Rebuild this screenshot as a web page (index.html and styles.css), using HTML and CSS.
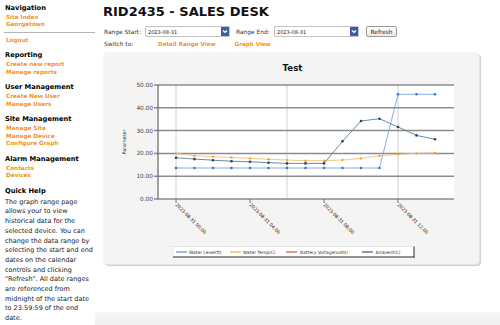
FILE: index.html
```html
<!DOCTYPE html>
<html>
    <head>
        <meta name="viewport" content="width=device-width, initial-scale=1" />
        <title>RID2435 - SALES DESK</title>
        <link rel="stylesheet" href="styles.css">
    </head>
<body>

    <div class="page">

        <div class="side_nav">
            <div class="nav_section nav_section--top">
                <div class="nav_head">Navigation</div>
                <a class="nav_link" href="#">Site Index</a>
                <a class="nav_link" href="#">Georgetown</a>
            </div>
            <div class="nav_rule"></div>
            <div class="nav_section">
                <a class="nav_link" href="#">Logout</a>
            </div>
            <div class="nav_section">
                <div class="nav_head">Reporting</div>
                <a class="nav_link" href="#">Create new report</a>
                <a class="nav_link" href="#">Manage reports</a>
            </div>
            <div class="nav_section">
                <div class="nav_head">User Management</div>
                <a class="nav_link" href="#">Create New User</a>
                <a class="nav_link" href="#">Manage Users</a>
            </div>
            <div class="nav_section">
                <div class="nav_head">Site Management</div>
                <a class="nav_link" href="#">Manage Site</a>
                <a class="nav_link" href="#">Manage Device</a>
                <a class="nav_link" href="#">Configure Graph</a>
            </div>
            <div class="nav_section">
                <div class="nav_head">Alarm Management</div>
                <a class="nav_link" href="#">Contacts</a>
                <a class="nav_link" href="#">Devices</a>
            </div>
            <div class="nav_section">
                <div class="nav_head">Quick Help</div>
                <p class="help_text">The graph range page allows your to view historical data for the selected device. You can change the data range by selecting the start and end dates on the calendar controls and clicking "Refresh". All date ranges are referenced from midnight of the start date to 23:59:59 of the end date.</p>
            </div>
        </div>

        <div class="main">
            <h1 class="site_title">RID2435 - SALES DESK</h1>

            <div class="range_row">
                <span class="range_label">Range Start:</span>
                <div class="fake_select">
                    <span>2023-08-31</span>
                    <span class="fake_select_arrow">
                        <svg width="6" height="5" viewBox="0 0 6 5"><path d="M1 1.5 L3 3.5 L5 1.5" fill="none" stroke="white" stroke-width="1.2"/></svg>
                    </span>
                </div>
                <span class="range_label range_label--end">Range End:</span>
                <div class="fake_select">
                    <span>2023-08-31</span>
                    <span class="fake_select_arrow">
                        <svg width="6" height="5" viewBox="0 0 6 5"><path d="M1 1.5 L3 3.5 L5 1.5" fill="none" stroke="white" stroke-width="1.2"/></svg>
                    </span>
                </div>
                <button class="refresh_button">Refresh</button>
            </div>

            <div class="switch_row">
                <span class="switch_label">Switch to:</span>
                <a class="switch_link" href="#">Detail Range View</a>
                <a class="switch_link switch_link--graph" href="#">Graph View</a>
            </div>

            <div class="chart_panel">
                <svg class="chart" width="376" height="212" viewBox="103 52 376 212">
                    <defs>
                        <marker id="dot_level" markerUnits="userSpaceOnUse" markerWidth="4" markerHeight="4" refX="2" refY="2"><circle cx="2" cy="2" r="1.3" fill="#3a74c8"/></marker>
                        <marker id="dot_temp" markerUnits="userSpaceOnUse" markerWidth="4" markerHeight="4" refX="2" refY="2"><circle cx="2" cy="2" r="1.2" fill="#f0a530"/></marker>
                        <marker id="dot_amb" markerUnits="userSpaceOnUse" markerWidth="4" markerHeight="4" refX="2" refY="2"><circle cx="2" cy="2" r="1.3" fill="#1c4778"/></marker>
                    </defs>

                    <text class="chart_title" x="292.5" y="71" text-anchor="middle">Test</text>

                    <rect x="158" y="85" width="296" height="114" fill="white"/>

                    <!-- vertical grid -->
                    <g stroke="#c4c4c4" stroke-width="0.8">
                        <line x1="176" y1="85" x2="176" y2="199"/>
                        <line x1="287" y1="85" x2="287" y2="199"/>
                        <line x1="398" y1="85" x2="398" y2="199"/>
                    </g>

                    <!-- horizontal grid -->
                    <g stroke="#8c8c8c" stroke-width="1.5">
                        <line x1="154" y1="85" x2="454" y2="85"/>
                        <line x1="154" y1="107.8" x2="454" y2="107.8"/>
                        <line x1="154" y1="130.6" x2="454" y2="130.6"/>
                        <line x1="154" y1="153.4" x2="454" y2="153.4"/>
                        <line x1="154" y1="176.2" x2="454" y2="176.2"/>
                        <line x1="154" y1="199" x2="454" y2="199"/>
                    </g>
                    <line x1="158" y1="85" x2="158" y2="199" stroke="#666" stroke-width="1.2"/>

                    <g stroke="#555" stroke-width="0.8">
                        <line x1="176" y1="199" x2="176" y2="203"/>
                        <line x1="250" y1="199" x2="250" y2="203"/>
                        <line x1="324" y1="199" x2="324" y2="203"/>
                        <line x1="398" y1="199" x2="398" y2="203"/>
                    </g>

                    <g class="axis_text" text-anchor="end">
                        <text x="153" y="87">50.00</text>
                        <text x="153" y="109.8">40.00</text>
                        <text x="153" y="132.6">30.00</text>
                        <text x="153" y="155.4">20.00</text>
                        <text x="153" y="178.2">10.00</text>
                        <text x="153" y="201">0.00</text>
                    </g>

                    <text class="axis_name" x="126" y="142" text-anchor="middle" transform="rotate(-90 126 142)">Parameter</text>

                    <g class="date_text">
                        <text x="175" y="205" transform="rotate(45 175 205)">2023-08-31 00:00</text>
                        <text x="249" y="205" transform="rotate(45 249 205)">2023-08-31 04:00</text>
                        <text x="323" y="205" transform="rotate(45 323 205)">2023-08-31 08:00</text>
                        <text x="397" y="205" transform="rotate(45 397 205)">2023-08-31 12:00</text>
                    </g>

                    <!-- series -->
                    <polyline class="series" stroke="#76a5e6" marker-start="url(#dot_level)" marker-mid="url(#dot_level)" marker-end="url(#dot_level)"
                        points="176,168 194.5,168 213,168 231.5,168 250,168 268.5,168 287,168 305.5,168 324,168 342.5,168 361,168 379.5,168 398,94.3 416.5,94.3 435,94.3"/>
                    <polyline class="series" stroke="#f5c27a" marker-start="url(#dot_temp)" marker-mid="url(#dot_temp)" marker-end="url(#dot_temp)"
                        points="176,153.6 194.5,155.7 213,156.6 231.5,157.5 250,158.4 268.5,159.3 287,160 305.5,160.7 324,160.7 342.5,160 361,158.4 379.5,155.9 398,154.3 416.5,153.4 435,152.9"/>
                    <polyline class="series" stroke="#5e7f90" marker-start="url(#dot_amb)" marker-mid="url(#dot_amb)" marker-end="url(#dot_amb)"
                        points="176,157.7 194.5,159.1 213,160.2 231.5,161.2 250,161.8 268.5,162.7 287,163.4 305.5,163.4 324,163.4 342.5,141.3 361,121 379.5,118.7 398,127 416.5,135.4 435,139.3"/>

                    <!-- legend -->
                    <rect x="173" y="246.5" width="241" height="10.5" fill="white" stroke="#d0d0d0" stroke-width="0.5"/>
                    <line x1="173" y1="257" x2="414.5" y2="257" stroke="#333" stroke-width="1"/>
                    <line x1="414" y1="246.5" x2="414" y2="257.5" stroke="#333" stroke-width="1"/>
                    <g stroke-width="1.2">
                        <line x1="176" y1="252" x2="187" y2="252" stroke="#5b8fd8"/>
                        <line x1="230" y1="252" x2="241" y2="252" stroke="#f4b042"/>
                        <line x1="286" y1="252" x2="297" y2="252" stroke="#e0502a"/>
                        <line x1="362" y1="252" x2="373" y2="252" stroke="#2c5b85"/>
                    </g>
                    <g class="legend_text">
                        <text x="189" y="253.6">Water Level(ft)</text>
                        <text x="243" y="253.6">Water Temp(C)</text>
                        <text x="300" y="253.6">Battery Voltage(volts)</text>
                        <text x="375.5" y="253.6">Ambient(C)</text>
                    </g>
                </svg>
            </div>

            <div class="bottom_band"></div>
        </div>

    </div>

</body>
</html>
```

FILE: styles.css
```css
body {
    margin: 0;
    font-family: 'DejaVu Sans', 'Liberation Sans', sans-serif;
    background-color: white;
    color: #222;
}

.page {
    display: flex;
    align-items: flex-start;
}

.side_nav {
    width: 90px;
    padding-left: 5px;
    flex-shrink: 0;
}

.nav_section {
    display: flex;
    flex-direction: column;
    margin-bottom: 6.4px;
}

.nav_section--top {
    margin-top: 3px;
    margin-bottom: 3.4px;
}

.nav_head {
    font-size: 6.7px;
    font-weight: bold;
    color: black;
    line-height: 10px;
    margin-bottom: 1px;
}

.nav_link {
    font-size: 5.7px;
    font-weight: bold;
    color: #f39322;
    line-height: 7.3px;
    text-decoration: none;
    padding-left: 1px;
}

.nav_rule {
    height: 1px;
    background-color: #b5b5b5;
    margin: 0 0 3.8px -1px;
}

.help_text {
    margin: 1px 0 0 0;
    font-size: 6.5px;
    line-height: 9.7px;
    color: #222;
}

.main {
    padding-left: 8px;
    padding-top: 4px;
    flex: 1;
}

.site_title {
    margin: 0;
    font-size: 13px;
    line-height: 16px;
    color: #111;
}

.range_row {
    display: flex;
    align-items: center;
    margin-top: 6px;
    height: 11px;
    font-size: 5.9px;
}

.range_label {
    width: 41px;
    padding-left: 1px;
    color: #333;
}

.range_label--end {
    width: 38px;
    padding-left: 0;
    margin-left: 6px;
}

.fake_select {
    width: 81px;
    height: 9px;
    border: 1px solid #c4c4c4;
    border-radius: 1px;
    background-color: white;
    display: flex;
    align-items: center;
    justify-content: space-between;
    font-size: 5px;
    padding-left: 2px;
}

.fake_select_arrow {
    width: 8px;
    height: 9px;
    background-color: #3d5ea6;
    display: flex;
    align-items: center;
    justify-content: center;
}

.refresh_button {
    margin-left: 7px;
    height: 11px;
    width: 31px;
    padding: 0;
    font-family: inherit;
    font-size: 5.8px;
    color: #222;
    border: 1px solid #9a9a9a;
    border-radius: 2px;
    background: linear-gradient(#ffffff, #ececec);
}

.switch_row {
    display: flex;
    align-items: center;
    margin-top: 3px;
    height: 8px;
    font-size: 5.9px;
}

.switch_label {
    width: 54px;
    padding-left: 1px;
    color: #333;
}

.switch_link {
    font-size: 5.6px;
    font-weight: bold;
    color: #f39322;
    text-decoration: none;
}

.switch_link--graph {
    margin-left: 19px;
}

.chart_panel {
    margin-top: 4px;
    width: 376px;
    height: 212px;
    background-color: #f4f4f4;
    border-radius: 4px;
    box-shadow: 1px 1px 0 #e2e2e2, 2px 2px 1px #cfcfcf;
}

.chart {
    display: block;
}

.chart_title {
    font-size: 8.6px;
    font-weight: bold;
    fill: #111;
}

.axis_text {
    font-size: 5.8px;
    fill: #444;
}

.axis_name {
    font-size: 4.8px;
    fill: #333;
}

.date_text {
    font-size: 4.6px;
    fill: #222;
}

.series {
    fill: none;
    stroke-width: 0.9;
}

.legend_text {
    font-size: 4.4px;
    fill: #333;
}

.bottom_band {
    margin-top: 48px;
    margin-left: -8px;
    height: 20px;
    background: linear-gradient(#f6f6f6, #ececec);
}
```
